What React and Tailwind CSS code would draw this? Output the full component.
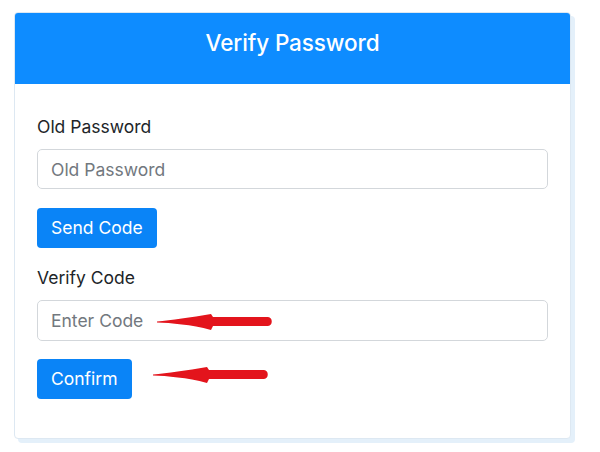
import React from "react";

function Arrow({ className }) {
  return (
    <svg className={className} width="120" height="20" viewBox="0 0 120 20" fill="none">
      <path
        d="M1 9.5 C 15 8, 35 5.5, 55 2 L 57 5 L 112 5 C 117 5, 117 14, 112 14 L 57 14 L 55 18 C 35 12.5, 15 11, 1 10.5 Z"
        fill="#e3141c"
      />
    </svg>
  );
}

export default function App() {
  return (
    <div className="w-[600px] h-[452px] bg-white pt-[12px] pl-[14px] relative" style={{ fontFamily: "Inter, 'Noto Sans', sans-serif" }}>
      <div className="w-[557px] h-[427px] bg-white border border-[#dde8f2] rounded-[4px] shadow-[4px_4px_0_#e4f0fa] flex flex-col overflow-hidden">
        <div className="h-[71px] bg-[#0e8cff] flex items-center justify-center pb-[11px]">
          <h1 className="text-[22.5px] font-medium text-white tracking-[-0.1px]">Verify Password</h1>
        </div>
        <div className="flex flex-col items-start px-[22px] pt-[31px]">
          <label className="text-[17.5px] leading-[24px] text-[#212529]">Old Password</label>
          <input
            className="mt-[10px] w-full h-[40px] border border-[#d3d7db] rounded-[5px] px-[13px] text-[17.5px] text-[#212529] placeholder:text-[#72787e] outline-none"
            placeholder="Old Password"
          />
          <button className="mt-[19px] h-[40px] px-[14px] rounded-[4px] bg-[#0a84f7] text-white text-[17.5px]">Send Code</button>
          <label className="mt-[18px] text-[17.5px] leading-[24px] text-[#212529]">Verify Code</label>
          <input
            className="mt-[10px] w-full h-[41px] border border-[#d3d7db] rounded-[5px] px-[13px] text-[17.5px] text-[#212529] placeholder:text-[#72787e] outline-none"
            placeholder="Enter Code"
          />
          <button className="mt-[18px] h-[40px] px-[14px] rounded-[4px] bg-[#0a84f7] text-white text-[17.5px]">Confirm</button>
        </div>
      </div>
      <Arrow className="absolute left-[156px] top-[312px]" />
      <Arrow className="absolute left-[152px] top-[365px]" />
    </div>
  );
}
